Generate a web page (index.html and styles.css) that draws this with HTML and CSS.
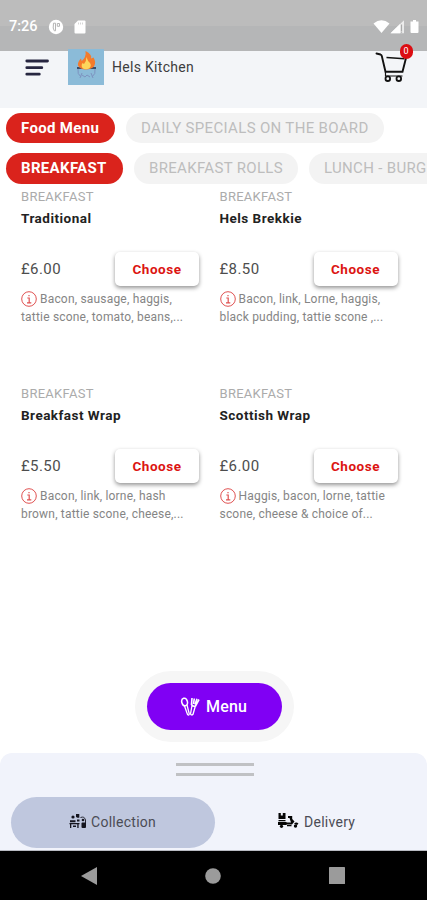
FILE: index.html
```html
<!DOCTYPE html>
<html lang="en">
<head>
<meta charset="utf-8">
<title>Hels Kitchen</title>
<link rel="stylesheet" href="styles.css">
</head>
<body>
<div class="phone">
  <div class="status">
    <span class="time">7:26</span>
    <svg class="s-app" width="16" height="16" viewBox="0 0 16 16"><circle cx="8" cy="8" r="7.2" fill="#fff"/><path d="M5.500 4.200h2v7.600h-1.200q-1.800-1.800-.8-7.600zM9.300 4.500h2.200v2.800H9.300z" fill="none" stroke="#b5b5b5" stroke-width="1"/></svg>
    <svg class="s-sd" width="12" height="14" viewBox="0 0 12 14"><path d="M4 .5h6.500q1 0 1 1v11q0 1-1 1h-9q-1 0-1-1V4z" fill="#fff"/><path d="M4.500 2.500v2M6.500 2.500v2M8.500 2.500v2" stroke="#ccc" stroke-width=".8"/></svg>
    <svg class="s-right" width="48" height="16" viewBox="0 0 48 16"><path d="M.5 4.500q8-6.500 16 0L8.500 14z" fill="#fff"/><path d="M17.500 14.200L31 1.200v13z" fill="#fff" opacity=".72"/><path d="M17.500 14.200L27 5v9.200z" fill="#fff"/><path d="M28.500 5.500v6.500M28.500 12.600v1.200" stroke="#aaa" stroke-width="1.200"/><path d="M40 1h3v1.500h2.500V13q0 1-1 1h-6q-1 0-1-1V2.500H40z" fill="#fff"/></svg>
  </div>

  <header class="header">
    <svg class="burger" width="24" height="18" viewBox="0 0 24 18"><path d="M1.800 2h20.700M1.800 8.700h15M1.800 15.200h12.500" stroke="#262640" stroke-width="2.800" stroke-linecap="round"/></svg>
    <svg class="logo" width="36" height="36" viewBox="0 0 36 36"><rect width="36" height="36" fill="#8bbbd8"/><path d="M10 20q-1 5 3 8M27 20q1 5-3 8M12 29l2-5M25 29l-2-5M14 26l3 2 2-2 3 2" fill="none" stroke="#7d93c0" stroke-width="1"/><path d="M9 19h19" stroke="#30415d" stroke-width="1.800"/><path d="M17.500 2q7 3.500 5.500 7.500l2.500-1q3 5 .5 9-3 3-8 3-6 0-8-4-.6-3.500 3-7l.7 2.500Q18.500 8 17.500 2z" fill="#f47b2c"/><path d="M18.500 8q1 4 3.500 6 2 3-1 5.500-3 1.500-6 0-2.500-2.500-.5-5.500l1.500 1q2.500-3 2.500-7z" fill="#fdd65b"/></svg>
    <h1 class="shop">Hels Kitchen</h1>
    <div class="cart">
      <svg width="34" height="32" viewBox="0 0 34 32"><g fill="none" stroke="#111"><path d="M1.500 2.500l4 1q1 .5 1.300 1.500L10.500 20.700h17L31 7" stroke-width="1.900" stroke-linecap="round"/><path d="M11.500 6.500l18 1.200" stroke-width="1.400"/><path d="M10.500 20.500v4.500h17" stroke-width="1.200"/><circle cx="12.800" cy="27.700" r="2.300" stroke-width="1.800"/><circle cx="23.800" cy="27.700" r="2.300" stroke-width="1.800"/></g></svg>
      <span class="badge">0</span>
    </div>
  </header>

  <nav class="chips menus">
    <span class="chip on c1">Food Menu</span>
    <span class="chip c2">DAILY SPECIALS ON THE BOARD</span>
  </nav>
  <nav class="chips cats">
    <span class="chip on c3">BREAKFAST</span>
    <span class="chip c4">BREAKFAST ROLLS</span>
    <span class="chip c5">LUNCH - BURG</span>
  </nav>

  <svg class="defs" width="0" height="0"><symbol id="info" viewBox="0 0 16 16"><circle cx="8" cy="8" r="7.300" fill="none" stroke="#e05252" stroke-width="1"/><path d="M8 3.900v1.400M6.300 7h1.900v4.500M6 11.800h4.300" fill="none" stroke="#e05252" stroke-width="1.200"/></symbol></svg>

  <main class="grid">
    <article class="item">
      <p class="cat">BREAKFAST</p>
      <h2 class="name">Traditional</h2>
      <div class="buy"><span class="price">£6.00</span><button class="choose">Choose</button></div>
      <p class="desc"><svg class="info"><use href="#info"/></svg>Bacon, sausage, haggis,<br>tattie scone, tomato, beans,...</p>
    </article>
    <article class="item">
      <p class="cat">BREAKFAST</p>
      <h2 class="name">Hels Brekkie</h2>
      <div class="buy"><span class="price">£8.50</span><button class="choose">Choose</button></div>
      <p class="desc"><svg class="info"><use href="#info"/></svg>Bacon, link, Lorne, haggis,<br>black pudding, tattie scone ,...</p>
    </article>
    <article class="item">
      <p class="cat">BREAKFAST</p>
      <h2 class="name">Breakfast Wrap</h2>
      <div class="buy"><span class="price">£5.50</span><button class="choose">Choose</button></div>
      <p class="desc"><svg class="info"><use href="#info"/></svg>Bacon, link, lorne, hash<br>brown, tattie scone, cheese,...</p>
    </article>
    <article class="item">
      <p class="cat">BREAKFAST</p>
      <h2 class="name">Scottish Wrap</h2>
      <div class="buy"><span class="price">£6.00</span><button class="choose">Choose</button></div>
      <p class="desc"><svg class="info"><use href="#info"/></svg>Haggis, bacon, lorne, tattie<br>scone, cheese &amp; choice of...</p>
    </article>
  </main>

  <div class="menu-wrap">
    <button class="menu-btn">
      <svg width="20" height="20" viewBox="0 0 20 20" fill="none" stroke="#fff"><ellipse cx="4.600" cy="5" rx="2.800" ry="3.800" stroke-width="1.500" transform="rotate(-15 4.600 5)"/><path d="M4.500 9l3 8.500q1.500 1.500 1.800-.5L7 8" stroke-width="1.300"/><path d="M12 1l-.5 6.500q1.500 2.500 4 1.500L19 2.500M14.300 1.500L13.500 7M17 1.800L15 7.500" stroke-width="1.600"/><path d="M12 8.500L10.500 17q1 1.800 2.500.3l2.300-8" stroke-width="1.300"/></svg>
      <span>Menu</span>
    </button>
  </div>

  <section class="sheet">
    <div class="handle"></div>
    <div class="modes">
      <div class="mode active">
        <svg width="18" height="16" viewBox="0 0 18 16" fill="#15151f"><circle cx="4" cy="4" r="1.600"/><path d="M1 7.200h5.500v2H1zM7 1h3.300v3.800H8.500L7 4z"/><path d="M.5 10h10v1.300H.5zM1 11h1.300v4H1zM8.300 11h1.300v4H8.300zM4 12.500h3V14H4z"/><path d="M8 6.500h2.500v2H8z"/><path d="M11.500 4.500q4-1.500 5 2.500v4" fill="none" stroke="#15151f" stroke-width=".9"/><circle cx="14" cy="7" r="1.300"/><rect x="12.500" y="9.500" width="4.500" height="5.500" rx="1"/></svg>
        <span>Collection</span>
      </div>
      <div class="mode">
        <svg width="22" height="18" viewBox="0 0 22 18" fill="#050505"><path d="M1.500 1h2.300v2.500h2V1h2.700v6h-7z"/><path d="M1.500 8h7v1.200h-7zM1 10h8.500v3H1z"/><path d="M11 4h4.200v3l2.300 2.500-2.500 3H9v-2h5l-1.500-4.500H11z"/><circle cx="4.500" cy="14.300" r="1.600"/><circle cx="18.500" cy="14" r="1.700"/><path d="M17 11.500q2.500-2 4.500.3l-1.500 1.200zM10 13h4.500v1.200H10z"/></svg>
        <span>Delivery</span>
      </div>
    </div>
  </section>

  <footer class="sysnav">
    <svg width="16" height="18" viewBox="0 0 16 18"><path d="M0 9L16 0v18z" fill="#9b9b9b"/></svg>
    <svg width="16" height="16" viewBox="0 0 16 16"><circle cx="8" cy="8" r="7.800" fill="#9b9b9b"/></svg>
    <svg width="16" height="17" viewBox="0 0 16 17"><rect width="16" height="17" rx=".6" fill="#9b9b9b"/></svg>
  </footer>
</div>
</body>
</html>
```

FILE: styles.css
```css
* { box-sizing: border-box; }
body, h1, h2, p { margin: 0; }
body { font-family: Roboto, "Liberation Sans", sans-serif; background: #fff; overflow: hidden; }
button { font-family: inherit; border: 0; margin: 0; padding: 0; }
.defs { display: none; }

.phone { width: 427px; height: 900px; display: flex; flex-direction: column; overflow: hidden; }
.phone > * { flex-shrink: 0; }

.status { height: 51px; padding: 2px 6px 0 9px; display: flex; align-items: center; color: #fff; background: linear-gradient(#bcbcbc 0 26px, #b5b6b7 26px); }
.time { width: 29px; font-size: 14.500px; font-weight: 500; }
.s-app { margin-left: 10px; }
.s-sd { margin-left: 10px; }
.s-right { margin-left: auto; }

.header { height: 57px; padding: 0 16px 0 25px; display: flex; align-items: flex-start; background: #f3f5f8; }
.burger { margin-top: 8px; }
.logo { margin: -2px 0 0 19px; }
.shop { margin: 7px 0 0 8px; font-size: 14px; line-height: 18px; font-weight: 400; color: #3d3d3d; letter-spacing: .3px; }
.cart { position: relative; width: 34px; height: 32px; margin-left: auto; margin-right: 2px; }
.badge { position: absolute; left: 24.500px; top: -7px; width: 13px; height: 15px; border-radius: 7px; background: #dc0d12; color: #fff; font-size: 9px; line-height: 15px; text-align: center; }

.chips { display: flex; gap: 11px; padding-left: 6px; white-space: nowrap; }
.menus { margin-top: 5px; }
.cats { margin-top: 10px; }
.chip { flex: none; height: 31px; border-radius: 16px; padding-left: 15px; line-height: 31px; font-size: 15px; letter-spacing: .33px; color: #bdbdbd; background: #f3f3f3; }
.chip.on { color: #fff; font-weight: 700; background: #da231c; }
.menus .chip { height: 30px; line-height: 30px; }
.c1 { width: 109px; }
.c2 { width: 258px; }
.c3 { width: 117px; }
.c4 { width: 164px; }
.c5 { width: 160px; }

.grid { display: grid; grid-template-columns: 178px 178px; column-gap: 20.500px; grid-auto-rows: 197px; padding-left: 21px; height: 486px; margin-top: 1px; }
.item { padding-top: 3px; }
.cat { font-size: 13px; line-height: 18px; letter-spacing: .28px; color: #ababab; }
.name { margin-top: 3px; font-size: 13.500px; line-height: 18px; font-weight: 700; letter-spacing: .48px; color: #222; }
.buy { display: flex; justify-content: space-between; align-items: center; height: 34px; margin-top: 25px; }
.price { margin-top: -1px; font-size: 15px; letter-spacing: .4px; color: #4d4d4d; }
.choose { width: 84px; height: 34px; padding-bottom: 1px; border-radius: 5px; background: #fff; color: #dc1512; font-size: 13.500px; font-weight: 700; letter-spacing: .55px; box-shadow: 0 2px 4px rgba(0,0,0,.42); }
.desc { margin-top: 4px; font-size: 12px; line-height: 18px; letter-spacing: .19px; color: #858585; white-space: nowrap; }
.info { width: 16px; height: 16px; vertical-align: -4px; margin-right: 3px; }

.menu-wrap { width: 159px; height: 71px; margin-left: 135px; padding: 12px; border-radius: 36px; background: #f6f6f6; }
.menu-btn { width: 135px; height: 47px; border-radius: 24px; background: #8000f4; color: #fff; display: flex; align-items: center; padding-left: 33px; font-size: 16px; font-weight: 500; letter-spacing: .2px; }
.menu-btn span { margin-left: 6px; }

.sheet { height: 98px; margin-top: 11px; padding: 10px 0 0 11px; background: #f1f3fb; border-radius: 12px 12px 0 0; border-bottom: 1px solid #b9bbc2; }
.handle { width: 78px; height: 13px; margin-left: 165px; border-top: 3px solid #c0c1c4; border-bottom: 3px solid #c0c1c4; }
.modes { display: flex; margin-top: 21px; }
.mode { display: flex; align-items: center; width: 204px; height: 51px; padding-left: 58px; border-radius: 26px; font-size: 14px; letter-spacing: .27px; color: #4b4c55; }
.mode.active { background: #bfc7de; }
.mode svg { margin-top: -4px; }
.mode span { margin: -1px 0 0 4px; }
.mode:not(.active) svg { margin-left: 4px; }
.mode:not(.active) span { margin-left: 5px; }

.sysnav { height: 49px; background: #000; display: flex; align-items: center; gap: 108px; padding-left: 81px; }
```
